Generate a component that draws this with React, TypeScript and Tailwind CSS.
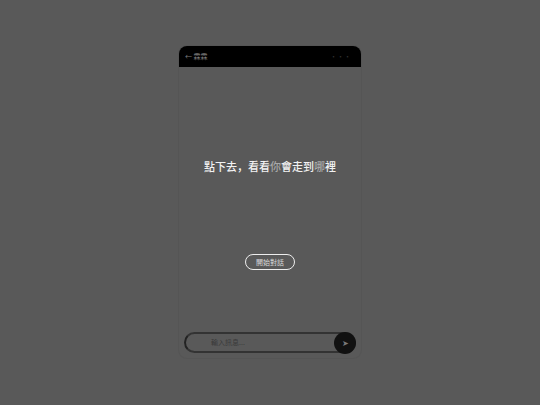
export default function App() {
  return (
    <div
      className="h-[405px] w-[540px] bg-[#595959] flex items-center justify-center overflow-hidden"
      style={{ fontFamily: '"Noto Sans CJK SC", "Liberation Sans", sans-serif' }}
    >
      {/* phone frame */}
      <div className="w-[182px] h-[312px] -mt-px rounded-lg shadow-[0_0_0_1px_#555555] bg-[#595959] flex flex-col overflow-hidden">
        <header className="h-[21px] bg-black flex items-center justify-between px-[6px] shrink-0">
          <span className="text-[7px] leading-none text-[#7d7d7d]">← 霖霖</span>
          <span className="text-[7px] leading-none text-[#333333] mr-[4px]">···</span>
        </header>

        <main className="flex-1 flex flex-col items-center">
          <h1 className="mt-[90px] text-[11px] leading-[18px] font-medium text-[#f2f2f2] whitespace-nowrap">
            點下去，看看<span className="text-[#a8a8a8]">你</span>會走到<span className="text-[#a8a8a8]">哪</span>裡
          </h1>
          <button className="mt-[79px] w-[50px] h-[16px] rounded-full border border-[#ededed] text-[7px] leading-none text-[#d9d9d9] flex items-center justify-center">
            開始對話
          </button>
        </main>

        <footer className="px-[5px] pb-[5px] shrink-0">
          <div className="h-[21px] rounded-full border-2 border-[#333333] border-l-[#222222] flex items-center justify-between">
            <span className="ml-[25px] text-[7px] leading-none text-[#3a3a3a]">輸入訊息...</span>
            <button className="-mr-[2px] w-[22px] h-[22px] rounded-full bg-[#111111] flex items-center justify-center text-[8px] leading-none text-[#7a7a7a]">
              ➤
            </button>
          </div>
        </footer>
      </div>
    </div>
  );
}
